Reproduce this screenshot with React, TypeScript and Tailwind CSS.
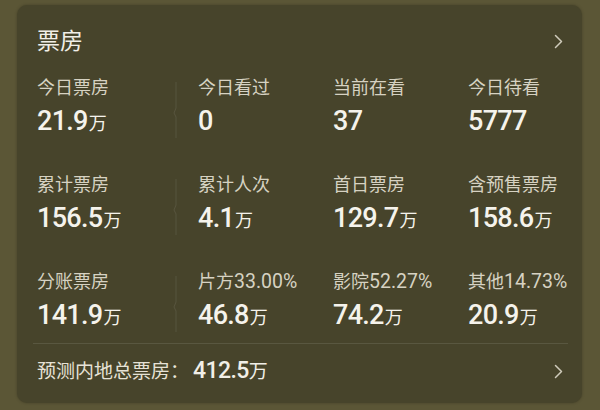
import React from 'react';

type Stat = { label: string; value: string; unit?: string };

const rows: Stat[][] = [
  [
    { label: '今日票房', value: '21.9', unit: '万' },
    { label: '今日看过', value: '0' },
    { label: '当前在看', value: '37' },
    { label: '今日待看', value: '5777' },
  ],
  [
    { label: '累计票房', value: '156.5', unit: '万' },
    { label: '累计人次', value: '4.1', unit: '万' },
    { label: '首日票房', value: '129.7', unit: '万' },
    { label: '含预售票房', value: '158.6', unit: '万' },
  ],
  [
    { label: '分账票房', value: '141.9', unit: '万' },
    { label: '片方33.00%', value: '46.8', unit: '万' },
    { label: '影院52.27%', value: '74.2', unit: '万' },
    { label: '其他14.73%', value: '20.9', unit: '万' },
  ],
];

const font = { fontFamily: 'Roboto, "Noto Sans CJK SC", sans-serif' };

function Chevron() {
  return (
    <svg width="9" height="15" viewBox="0 0 9 15" fill="none">
      <path d="M1.5 1.5 L7.5 7.5 L1.5 13.5" stroke="#cfcbbb" strokeWidth="1.5" strokeLinecap="round" strokeLinejoin="round" />
    </svg>
  );
}

function Divider() {
  // faint vertical rule with a small notch in the middle
  return (
    <svg width="8" height="56" viewBox="0 0 8 56" fill="none" className="mt-[6px] -ml-[4px]">
      <path d="M4 0 V26 L2 31 L4 35 V56" stroke="rgba(255,255,255,0.09)" strokeWidth="1" />
    </svg>
  );
}

// digits inside labels render a touch larger than the CJK part
function Label({ text }: { text: string }) {
  const m = text.match(/^([^0-9]+)([0-9.%]*)$/);
  const head = m ? m[1] : text;
  const tail = m ? m[2] : '';
  return (
    <div className="text-[18px] leading-[24px] text-[#d6d2c2] whitespace-nowrap">
      {head}
      {tail && <span className="text-[19.5px]">{tail}</span>}
    </div>
  );
}

function StatCell({ stat, className }: { stat: Stat; className: string }) {
  return (
    <div className={className}>
      <Label text={stat.label} />
      <div className="mt-[5px] flex items-baseline text-[#f5f3ec] h-[32px]">
        <span className="text-[27px] leading-[32px] font-medium tracking-[-0.7px]">{stat.value}</span>
        {stat.unit && <span className="text-[18px] leading-[32px] ml-[1px]">{stat.unit}</span>}
      </div>
    </div>
  );
}

export default function App() {
  return (
    <div className="w-[600px] h-[410px] bg-[#5b5636] pt-[5px] pl-[17px] overflow-hidden" style={font}>
      <div className="w-[565px] h-[398px] rounded-[10px] bg-[#47442b] shadow-[0_0_3px_rgba(0,0,0,0.25)] pt-[21px]">
        <div className="flex items-center justify-between pl-[20px] pr-[19px] h-[31px]">
          <span className="text-[23px] leading-[31px] text-[#f1efe7]">票房</span>
          <Chevron />
        </div>

        <div className="flex flex-col gap-[35px] mt-[19px] pl-[20px]">
          {rows.map((row, i) => (
            <div key={i} className="flex h-[62px]">
              <StatCell stat={row[0]} className="w-[139px]" />
              <div className="w-[22px]">
                <Divider />
              </div>
              <StatCell stat={row[1]} className="w-[135px]" />
              <StatCell stat={row[2]} className="w-[135px]" />
              <StatCell stat={row[3]} className="flex-1" />
            </div>
          ))}
        </div>

        <div className="mt-[11px] ml-[16px] mr-[14px] h-px bg-white/10" />

        <div className="flex items-center justify-between pl-[20px] pr-[19px] mt-[13px] h-[28px]">
          <div className="flex items-baseline text-[#f1efe7]">
            <span className="text-[19px] leading-[28px] text-[#e6e2d6]">预测内地总票房：</span>
            <span className="text-[23px] leading-[28px] font-medium tracking-[-0.6px] ml-[4px]">412.5</span>
            <span className="text-[19px] leading-[28px]">万</span>
          </div>
          <Chevron />
        </div>
      </div>
    </div>
  );
}
